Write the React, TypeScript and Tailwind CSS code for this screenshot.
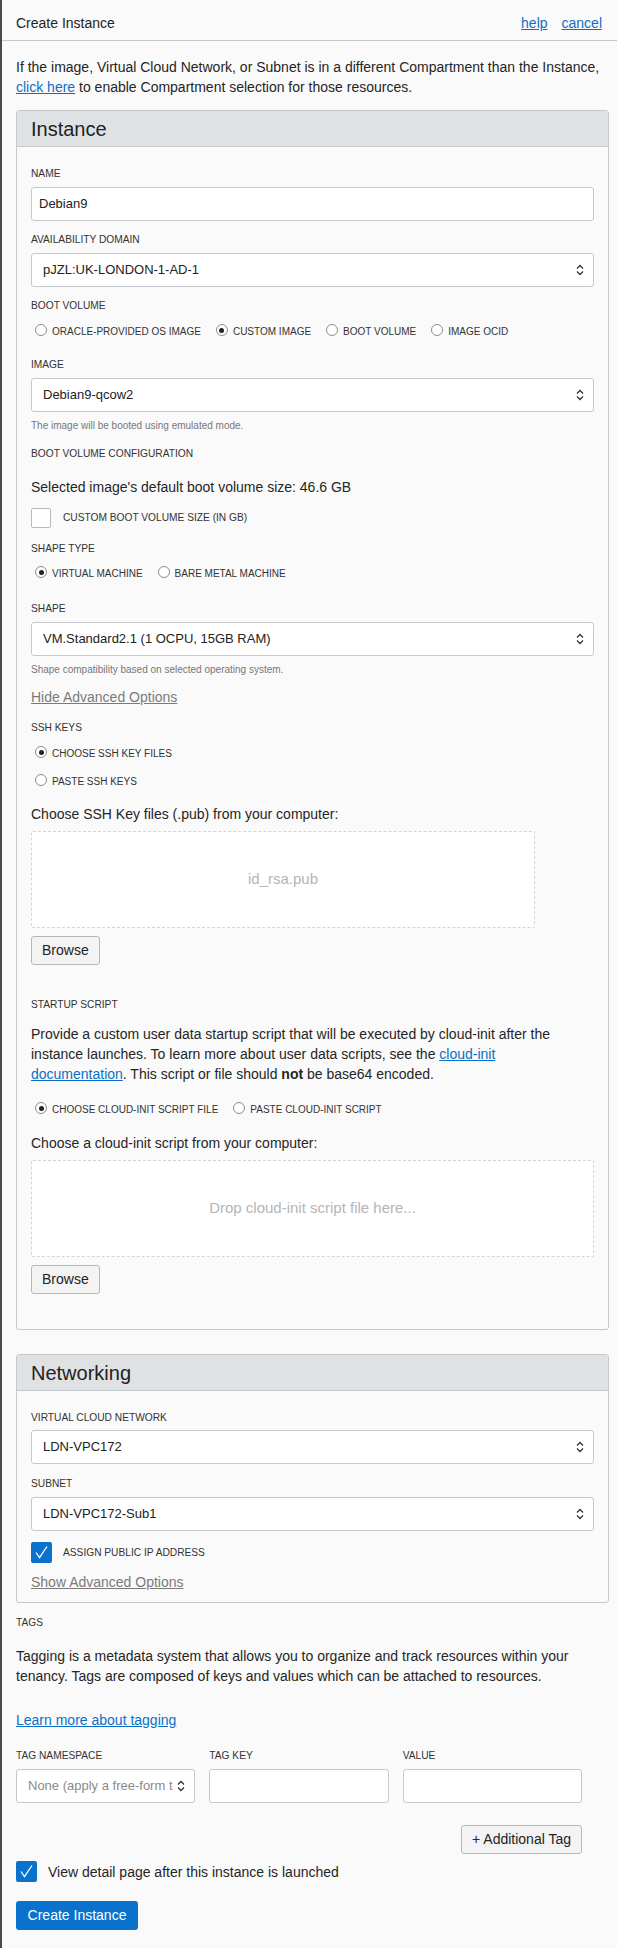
import React from "react";

const font = { fontFamily: '"Liberation Sans", Arial, sans-serif' };

function Label({ children, className = "" }: { children: React.ReactNode; className?: string }) {
  return <div className={`text-[10.2px] leading-[14px] uppercase text-[#333] ${className}`}>{children}</div>;
}

function Chevrons() {
  return (
    <svg width="8" height="14" viewBox="0 0 8 14" fill="none" stroke="#333" strokeWidth="1.3">
      <path d="M1 5.5 L4 2.5 L7 5.5" />
      <path d="M1 8.5 L4 11.5 L7 8.5" />
    </svg>
  );
}

function Select({ value, placeholder = false, className = "" }: { value: string; placeholder?: boolean; className?: string }) {
  return (
    <div
      className={`h-[34px] flex items-center justify-between bg-white border border-[#c5c8cc] rounded-[3px] pl-[11px] pr-[9px] ${className}`}
    >
      <span className={`text-[13px] whitespace-nowrap overflow-hidden ${placeholder ? "text-[#8a8a8a] text-[13.5px]" : "text-[#222]"}`}>
        {value}
      </span>
      <span className="shrink-0 ml-[4px]">
        <Chevrons />
      </span>
    </div>
  );
}

function TextInput({ value = "", className = "" }: { value?: string; className?: string }) {
  return (
    <div className={`h-[34px] flex items-center bg-white border border-[#c5c8cc] rounded-[3px] px-[7px] text-[13px] text-[#222] ${className}`}>
      {value}
    </div>
  );
}

function Radio({ label, checked = false }: { label: string; checked?: boolean }) {
  return (
    <div className="flex items-center h-[16px]">
      <span className="ml-[4px] w-[12px] h-[12px] rounded-full border border-[#8d8d8d] bg-white flex items-center justify-center -mt-[2px]">
        {checked && <span className="w-[5px] h-[5px] rounded-full bg-[#222]" />}
      </span>
      <span className="ml-[5px] text-[10px] uppercase text-[#333]">{label}</span>
    </div>
  );
}

function Checkbox({ checked = false, label, labelClass }: { checked?: boolean; label: string; labelClass: string }) {
  return (
    <div className="flex items-center">
      {checked ? (
        <span className="w-[21px] h-[21px] rounded-[2px] bg-[#0a72cc] flex items-center justify-center">
          <svg width="15" height="15" viewBox="0 0 15 15" fill="none" stroke="#fff" strokeWidth="1.3">
            <path d="M2 7.5 L5.5 12.5 L13 1.5" />
          </svg>
        </span>
      ) : (
        <span className="w-[20px] h-[20px] rounded-[2px] bg-white border border-[#b7b9bc]" />
      )}
      <span className={labelClass}>{label}</span>
    </div>
  );
}

function Button({ children }: { children: React.ReactNode }) {
  return (
    <button className="h-[29px] px-[10px] bg-[#f3f3f3] border border-[#b5b7ba] rounded-[3px] text-[14px] text-[#222]">
      {children}
    </button>
  );
}

function DropZone({ text, className = "" }: { text: string; className?: string }) {
  return (
    <div
      className={`h-[97px] bg-white border border-dashed border-[#d2d4d6] rounded-[2px] flex items-center justify-center text-[15px] text-[#b5b5b5] ${className}`}
    >
      {text}
    </div>
  );
}

function Panel({ title, children, className = "" }: { title: string; children: React.ReactNode; className?: string }) {
  return (
    <div className={`border border-[#c5c8cc] rounded-[3px] bg-[#fafafa] ${className}`}>
      <div className="h-[36px] flex items-center px-[14px] bg-[#dfe1e3] border-b border-[#c5c8cc] text-[20px] text-[#222]">
        {title}
      </div>
      {children}
    </div>
  );
}

const linkCls = "text-[#0b6fc6] underline";
const grayLink = "text-[#7a7a7a] underline";
const line = "text-[14px] leading-[20px]";

export default function App() {
  return (
    <div style={font} className="min-h-screen bg-[#fafafa] border-l-2 border-[#4a4a4a] text-[#252525]">
      <div className="h-[41px] flex items-center justify-between pl-[14px] pr-[15px] pt-[6px] border-b border-[#c4c7cb] text-[14px]">
        <span className="text-[#222]">Create Instance</span>
        <div className="flex gap-[14px]">
          <a className={linkCls}>help</a>
          <a className={linkCls}>cancel</a>
        </div>
      </div>

      <div className="pl-[14px] pr-[8px] pb-[19px]">
        <p className={`pt-[16px] ${line}`}>
          If the image, Virtual Cloud Network, or Subnet is in a different Compartment than the Instance,{" "}
          <a className={linkCls}>click here</a> to enable Compartment selection for those resources.
        </p>

        <Panel title="Instance" className="mt-[13px]">
          <div className="px-[14px] pt-[20px] pb-[35px]">
            <Label className="mb-[6px]">Name</Label>
            <TextInput value="Debian9" />

            <Label className="mt-[12px] mb-[6px]">Availability Domain</Label>
            <Select value="pJZL:UK-LONDON-1-AD-1" />

            <Label className="mt-[12px]">Boot Volume</Label>
            <div className="mt-[10px] flex gap-[11px]">
              <Radio label="Oracle-provided OS image" />
              <Radio label="Custom image" checked />
              <Radio label="Boot volume" />
              <Radio label="Image OCID" />
            </div>

            <Label className="mt-[19px] mb-[6px]">Image</Label>
            <Select value="Debian9-qcow2" />
            <div className="mt-[7px] text-[10px] leading-[14px] text-[#777]">The image will be booted using emulated mode.</div>

            <Label className="mt-[14px]">Boot Volume Configuration</Label>
            <p className={`mt-[16px] ${line}`}>Selected image's default boot volume size: 46.6 GB</p>
            <div className="mt-[11px]">
              <Checkbox label="Custom boot volume size (in GB)" labelClass="ml-[12px] text-[10.2px] uppercase text-[#333]" />
            </div>

            <Label className="mt-[14px]">Shape Type</Label>
            <div className="mt-[9px] flex gap-[11px]">
              <Radio label="Virtual machine" checked />
              <Radio label="Bare metal machine" />
            </div>

            <Label className="mt-[21px] mb-[6px]">Shape</Label>
            <Select value="VM.Standard2.1 (1 OCPU, 15GB RAM)" />
            <div className="mt-[7px] text-[10px] leading-[14px] text-[#777]">Shape compatibility based on selected operating system.</div>

            <div className={`mt-[10px] ${line}`}>
              <a className={grayLink}>Hide Advanced Options</a>
            </div>

            <Label className="mt-[14px]">SSH Keys</Label>
            <div className="mt-[10px]">
              <Radio label="Choose SSH key files" checked />
            </div>
            <div className="mt-[12px]">
              <Radio label="Paste SSH keys" />
            </div>
            <p className={`mt-[15px] ${line}`}>Choose SSH Key files (.pub) from your computer:</p>
            <DropZone text="id_rsa.pub" className="mt-[7px] w-[504px]" />
            <div className="mt-[8px] flex">
              <Button>Browse</Button>
            </div>

            <Label className="mt-[33px]">Startup Script</Label>
            <p className={`mt-[12px] ${line}`}>
              Provide a custom user data startup script that will be executed by cloud-init after the instance launches. To
              learn more about user data scripts, see the <a className={linkCls}>cloud-init documentation</a>. This script or
              file should <b>not</b> be base64 encoded.
            </p>
            <div className="mt-[17px] flex gap-[11px]">
              <Radio label="Choose cloud-init script file" checked />
              <Radio label="Paste cloud-init script" />
            </div>
            <p className={`mt-[16px] ${line}`}>Choose a cloud-init script from your computer:</p>
            <DropZone text="Drop cloud-init script file here..." className="mt-[7px]" />
            <div className="mt-[8px] flex">
              <Button>Browse</Button>
            </div>
          </div>
        </Panel>

        <Panel title="Networking" className="mt-[24px]">
          <div className="px-[14px] pt-[20px] pb-[10px]">
            <Label className="mb-[5px]">Virtual Cloud Network</Label>
            <Select value="LDN-VPC172" />
            <Label className="mt-[13px] mb-[6px]">Subnet</Label>
            <Select value="LDN-VPC172-Sub1" />
            <div className="mt-[11px]">
              <Checkbox checked label="Assign public IP address" labelClass="ml-[11px] text-[10.2px] uppercase text-[#333]" />
            </div>
            <div className={`mt-[9px] ${line}`}>
              <a className={grayLink}>Show Advanced Options</a>
            </div>
          </div>
        </Panel>

        <Label className="mt-[13px]">Tags</Label>
        <p className={`mt-[16px] ${line}`}>
          Tagging is a metadata system that allows you to organize and track resources within your tenancy. Tags are composed
          of keys and values which can be attached to resources.
        </p>
        <div className={`mt-[24px] ${line}`}>
          <a className={linkCls}>Learn more about tagging</a>
        </div>

        <div className="mt-[19px] w-[566px] grid grid-cols-3 gap-x-[14px]">
          <Label className="mb-[6px]">Tag Namespace</Label>
          <Label className="mb-[6px]">Tag Key</Label>
          <Label className="mb-[6px]">Value</Label>
          <Select value="None (apply a free-form tag)" placeholder />
          <TextInput />
          <TextInput />
        </div>
        <div className="mt-[22px] w-[566px] flex justify-end">
          <Button>+ Additional Tag</Button>
        </div>

        <div className="mt-[7px]">
          <Checkbox checked label="View detail page after this instance is launched" labelClass={`ml-[11px] ${line} text-[#252525]`} />
        </div>

        <div className="mt-[19px] flex">
          <button className="h-[29px] w-[122px] bg-[#0a72cc] rounded-[3px] text-[14px] text-white">Create Instance</button>
        </div>
      </div>
    </div>
  );
}
